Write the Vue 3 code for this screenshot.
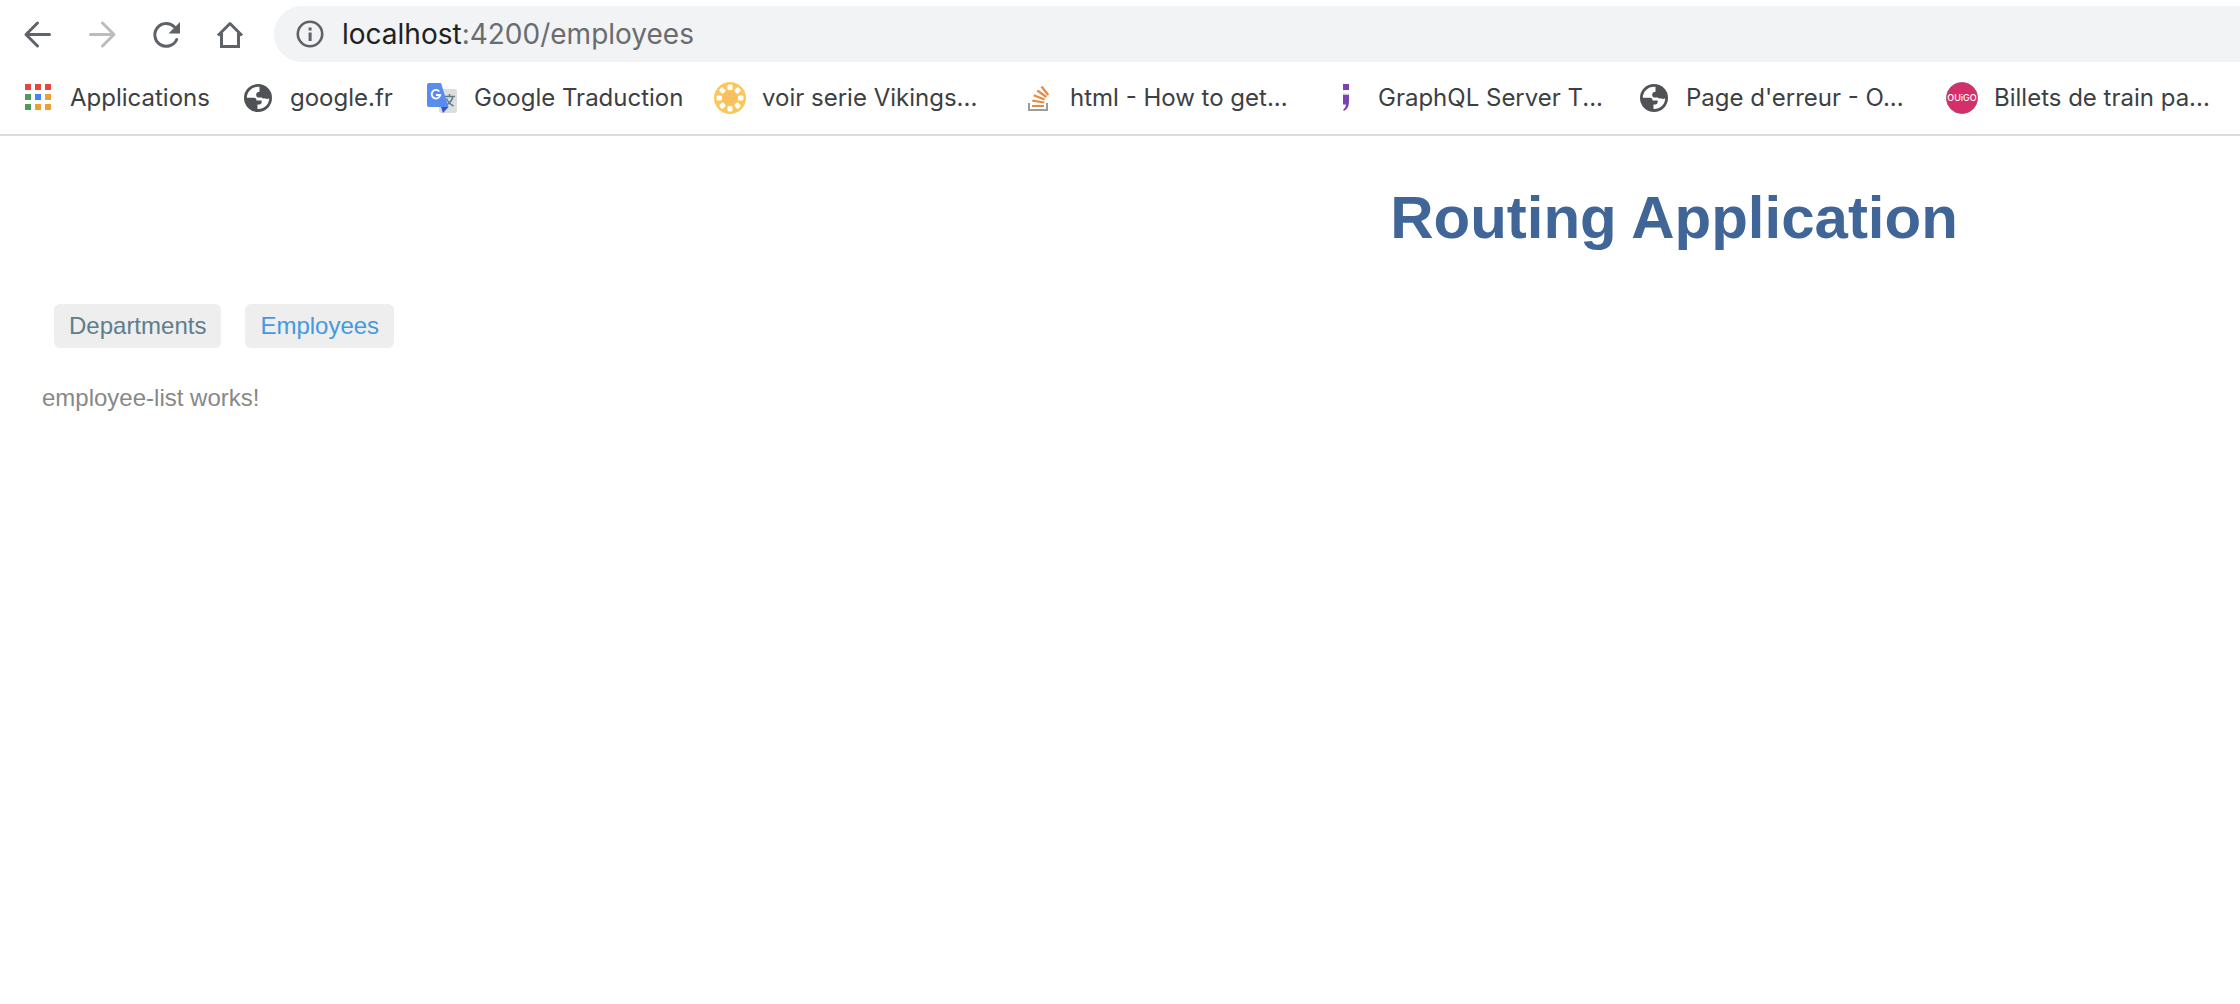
<script setup>
import { ref } from 'vue'

const bookmarks = [
  { icon: 'apps', label: 'Applications', width: 220 },
  { icon: 'globe', label: 'google.fr', width: 184 },
  { icon: 'translate', label: 'Google Traduction', width: 288 },
  { icon: 'wheel', label: 'voir serie Vikings...', width: 308 },
  { icon: 'stack', label: 'html - How to get...', width: 308 },
  { icon: 'semicolon', label: 'GraphQL Server T...', width: 308 },
  { icon: 'globe', label: "Page d'erreur - O...", width: 308 },
  { icon: 'ouigo', label: 'Billets de train pa...', width: 294 },
]

const appColors = ['#e8453c', '#e8453c', '#e8453c', '#4f9c58', '#4285f4', '#e8a234', '#4f9c58', '#e8a234', '#e8a234']
const spokes = [0, 45, 90, 135, 180, 225, 270, 315]
const active = ref('employees')
</script>

<template>
  <div class="window">
    <header class="chrome">
      <div class="toolbar">
        <button class="tool" type="button" aria-label="Back">
          <svg viewBox="0 0 32 32" fill="none" stroke="#5f6368" stroke-width="3" stroke-linecap="round" stroke-linejoin="round"><path d="M15.500 5 4 16.500 15.500 28M4 16.500h23.500" /></svg>
        </button>
        <button class="tool" type="button" aria-label="Forward">
          <svg viewBox="0 0 32 32" fill="none" stroke="#babcbe" stroke-width="3" stroke-linecap="round" stroke-linejoin="round"><path d="M16.500 5 28 16.500 16.500 28M28 16.500H4.500" /></svg>
        </button>
        <button class="tool" type="button" aria-label="Reload">
          <svg viewBox="0 0 32 32"><path d="M26.700 21.500A11.400 11.400 0 1 1 24.500 9" fill="none" stroke="#5f6368" stroke-width="3" stroke-linecap="round" /><path d="M30 4v11.500H18.500z" fill="#5f6368" /></svg>
        </button>
        <button class="tool" type="button" aria-label="Home">
          <svg viewBox="0 0 32 32" fill="none" stroke="#5f6368" stroke-width="3"><path d="M4 17.500 16 5.500l12 12" stroke-linejoin="round" /><path d="M7.500 15v13.500h17V15" /></svg>
        </button>
        <div class="omnibox">
          <svg class="info" viewBox="0 0 32 32" aria-hidden="true"><circle cx="16" cy="16" r="12.200" fill="none" stroke="#5f6368" stroke-width="2.600" /><path d="M14.600 9.500h3v3h-3zM14.600 14.500h3V23h-3z" fill="#5f6368" /></svg>
          <span class="url"><span class="host">localhost</span>:4200/employees</span>
        </div>
      </div>

      <nav class="bookmarks" aria-label="Bookmarks">
        <a v-for="b in bookmarks" :key="b.label" href="#" class="bookmark" :style="{ flexBasis: b.width + 'px' }">
          <svg class="icon" viewBox="0 0 32 32" aria-hidden="true">
            <template v-if="b.icon === 'apps'">
              <rect v-for="(c, i) in appColors" :key="i" :x="3 + (i % 3) * 10" :y="2 + Math.floor(i / 3) * 10" width="6" height="6" :fill="c" />
            </template>
            <template v-else-if="b.icon === 'globe'">
              <circle cx="16" cy="16" r="14" fill="#505256" />
              <path d="M17.500 4.800C10.500 4 5 9.200 4.800 15.800h7.200c1.800 0 2.500 1 2.500 2.700h5.200v1.400c0 1.600-1.200 2.600-3.200 2.600h-1v4.500c6.400.300 11.500-4.200 11.700-10.800-1.200.8-3 1-4.200 0-1.200.700-2.600.400-3.200-.700H17c-1.800 0-2.800-1-2.800-2.600 0-1.900 1.200-3.100 3.300-3.100z" fill="#fff" />
            </template>
            <template v-else-if="b.icon === 'translate'">
              <rect x="13" y="7" width="18" height="24" rx="2" fill="#dedede" />
              <path d="M18 14.500h11M23.500 12v2.500M26.800 14.500C26 19 22.500 22 19.500 23.800M20.500 16.500c1.500 3.500 4 6 7 7.500" fill="none" stroke="#607d8b" stroke-width="1.500" />
              <path d="M15 25h7.500L17 31z" fill="#3556bd" />
              <path d="M3 1h12l7.500 24H3a2 2 0 0 1-2-2V3a2 2 0 0 1 2-2z" fill="#5a8cf0" />
              <path d="M13.300 9.500A4.300 4.300 0 1 0 14.200 13H10" fill="none" stroke="#fff" stroke-width="1.800" />
            </template>
            <template v-else-if="b.icon === 'wheel'">
              <circle cx="16" cy="16" r="16" fill="#fac75d" />
              <rect v-for="a in spokes" :key="a" x="13.500" y="2.500" width="5" height="5.500" rx="1.500" fill="#fff" :transform="`rotate(${a} 16 16)`" />
              <circle cx="16" cy="16" r="7" fill="#f8c160" />
              <circle cx="16" cy="16" r="4" fill="none" stroke="#efb663" stroke-dasharray="2 2" />
            </template>
            <template v-else-if="b.icon === 'stack'">
              <path d="M7 21v7h18v-7" fill="none" stroke="#9a9ca0" stroke-width="2" />
              <path d="M10 24h12M10.300 18.700l11.900 1.800M11.700 13.300l10.900 4.200M15.300 8.500l9 6.500M19.500 4.500l6.800 8.500" fill="none" stroke="#e88a43" stroke-width="2.200" />
            </template>
            <template v-else-if="b.icon === 'semicolon'">
              <path d="M13 2h6v6h-6zM13 13h6v7c0 4.500-2 7.500-5.500 9.300v-2c1.700-1.300 2.300-2.700 2.300-4.800H13z" fill="#7b42b5" />
              <path d="M13 12.200h6" stroke="#c9afe0" />
            </template>
            <template v-else>
              <circle cx="16" cy="16" r="15.600" fill="#d42e6b" stroke="#a64c72" stroke-width=".8" />
              <text x="16" y="19" text-anchor="middle" class="brand">OUiGO</text>
            </template>
          </svg>
          <span>{{ b.label }}</span>
        </a>
      </nav>
    </header>

    <main class="page">
      <h1>Routing Application</h1>
      <nav class="routes" aria-label="Sections">
        <a href="#departments" :class="{ active: active === 'departments' }" @click="active = 'departments'">Departments</a>
        <a href="#employees" :class="{ active: active === 'employees' }" @click="active = 'employees'">Employees</a>
      </nav>
      <p>employee-list works!</p>
    </main>
  </div>
</template>

<style>
body {
  margin: 0;
  background: #fff;
}
</style>

<style scoped>
.window {
  min-height: 100vh;
  overflow: hidden;
}
.chrome {
  border-bottom: 2px solid #dadce0;
  font-family: Inter, "Liberation Sans", sans-serif;
}
.toolbar {
  display: flex;
  align-items: center;
  gap: 32px;
  padding: 6px 0 0 22px;
}
.tool {
  flex: none;
  width: 32px;
  height: 32px;
  padding: 0;
  border: 0;
  background: none;
}
.tool svg {
  display: block;
  width: 32px;
  height: 32px;
}
.omnibox {
  flex: 1;
  display: flex;
  align-items: center;
  gap: 16px;
  height: 56px;
  margin-left: -4px;
  padding-left: 20px;
  border-radius: 28px 0 0 28px;
  background: #f1f3f4;
}
.info {
  width: 32px;
  height: 32px;
}
.url {
  font-size: 28px;
  line-height: 32px;
  color: #6a6c6f;
}
.host {
  color: #202124;
}
.bookmarks {
  display: flex;
  align-items: center;
  height: 72px;
  padding-left: 22px;
}
.bookmark {
  flex: 0 0 auto;
  display: flex;
  align-items: center;
  gap: 16px;
  color: #3c4043;
  font-size: 24px;
  line-height: 32px;
  white-space: nowrap;
  text-decoration: none;
}
.icon {
  flex: none;
  width: 32px;
  height: 32px;
}
.brand {
  font: 500 9px Inter, sans-serif;
  fill: #fff;
}
.page {
  padding: 46px 0 0 42px;
  font-family: "Liberation Sans", Arial, sans-serif;
  font-size: 24px;
  line-height: 28px;
}
h1 {
  margin: 0;
  padding-left: 48.5%;
  color: #406697;
  font-size: 60px;
  line-height: 72px;
  text-align: center;
}
.routes {
  display: flex;
  gap: 24px;
  margin-top: 50px;
  padding-left: 12px;
}
.routes a {
  padding: 8px 15px;
  border-radius: 6px;
  background: #eee;
  color: #607d8b;
  text-decoration: none;
}
.routes a.active {
  color: #4499e0;
}
p {
  margin: 36px 0 0;
  color: #888;
}
</style>
